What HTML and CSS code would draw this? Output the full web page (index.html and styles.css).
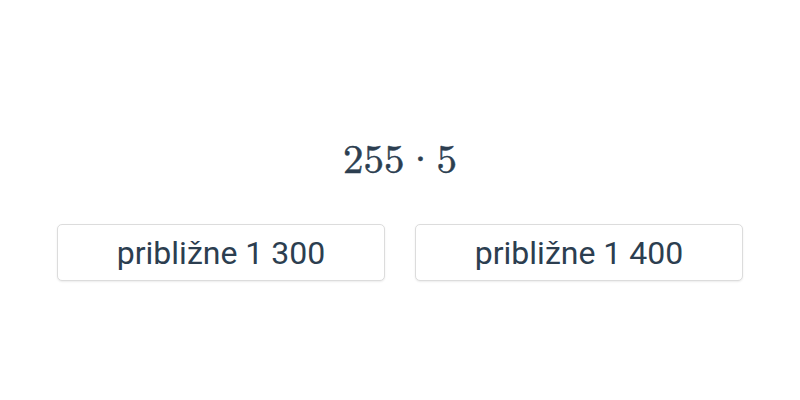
FILE: index.html
```html
<!DOCTYPE html>
<html>
<head>
<meta charset="utf-8">
<link rel="stylesheet" href="styles.css">
</head>
<body>
<div class="page">
  <div class="task"><span class="num">255</span><span class="op">·</span><span class="num">5</span></div>
  <div class="options">
    <button class="option">približne 1 300</button>
    <button class="option">približne 1 400</button>
  </div>
</div>
</body>
</html>
```
FILE: styles.css
```css
html, body {
  margin: 0;
  padding: 0;
  background: #ffffff;
}
.page {
  width: 800px;
  height: 400px;
  display: flex;
  flex-direction: column;
  align-items: center;
  padding-top: 129px;
  box-sizing: border-box;
}
.task {
  font-family: "Latin Modern Roman", "DejaVu Serif", "Liberation Serif", serif;
  font-size: 41px;
  line-height: 54px;
  height: 54px;
  color: #2c3e50;
  -webkit-text-stroke: 0.5px #2c3e50;
  display: flex;
}
.op {
  margin: 0;
}
.options {
  margin-top: 41px;
  display: flex;
  gap: 30px;
}
.option {
  width: 328px;
  height: 57px;
  box-sizing: border-box;
  background: #ffffff;
  border: 1px solid #dcdcdc;
  border-radius: 5px;
  box-shadow: 0 1px 2px rgba(0, 0, 0, 0.08);
  font-family: Roboto, "Noto Sans", sans-serif;
  font-size: 32px;
  color: #2c3e50;
  padding: 0;
  display: flex;
  align-items: center;
  justify-content: center;
}
```
